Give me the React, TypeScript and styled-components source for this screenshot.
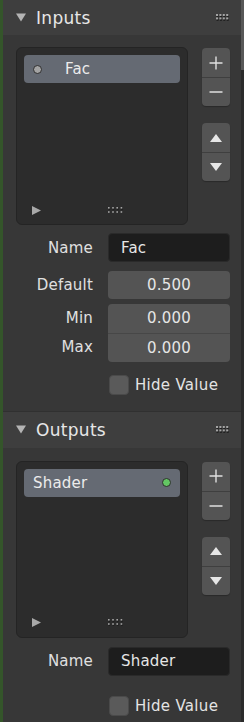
import * as React from 'react';
import styled, { createGlobalStyle } from "styled-components";

const GlobalStyle = createGlobalStyle`
    html, body {
        margin: 0;
        padding: 0;
        background: #373737;
    }
    body {
        font-family: "DejaVu Sans", "Noto Sans", sans-serif;
        color: #e4e4e4;
    }
`

const Frame = styled.div`
    display: flex;
    width: 244px;
    height: 722px;
    overflow: hidden;
    background: #373737;
`

const GreenStrip = styled.div`
    width: 3px;
    flex: none;
    background: #34552a;
`

const Column = styled.div`
    flex: 1;
    display: flex;
    flex-direction: column;
    min-width: 0;
`

const ScrollTrack = styled.div`
    width: 3px;
    flex: none;
    display: flex;
    flex-direction: column;
    background: #2b2b2b;
`

const ScrollThumb = styled.div`
    height: 70px;
    background: #585858;
`

const Header = styled.div<{ $h: number }>`
    height: ${p => p.$h}px;
    flex: none;
    display: flex;
    align-items: center;
    padding: 0 12px 0 13px;
    background: #3e3e3e;
    font-size: 17px;
    letter-spacing: 0.3px;
    color: #e6e6e6;

    .title {
        flex: 1;
        margin-left: 10px;
    }
`

const Body = styled.div<{ $top: number; $bottom: number }>`
    flex: none;
    display: flex;
    flex-direction: column;
    padding: ${p => p.$top}px 11px ${p => p.$bottom}px 13px;
    background: #373737;
`

const ListRow = styled.div`
    display: flex;
    gap: 14px;
    align-items: flex-start;
`

const ListBox = styled.div<{ $h: number }>`
    width: 172px;
    height: ${p => p.$h}px;
    box-sizing: border-box;
    flex: none;
    display: flex;
    flex-direction: column;
    padding: 7px 7px 0 7px;
    background: #2c2c2c;
    border: 1px solid #242424;
    border-radius: 6px;
`

const ListItem = styled.div`
    height: 28px;
    display: flex;
    align-items: center;
    padding: 0 9px 0 9px;
    background: #656a73;
    border-radius: 4px;
    font-size: 15px;
    letter-spacing: 0.2px;
    color: #ececec;

    .label {
        flex: 1;
    }
`

const Socket = styled.span<{ $color: string; $gap: number }>`
    width: 9px;
    height: 9px;
    box-sizing: border-box;
    border-radius: 50%;
    background: ${p => p.$color};
    border: 1px solid #2e2e2e;
    margin-right: ${p => p.$gap}px;
    flex: none;
`

const ListFooter = styled.div`
    margin-top: auto;
    height: 28px;
    display: flex;
    align-items: center;
    padding-left: 8px;

    .grip {
        margin-left: 67px;
    }
`

const SideButtons = styled.div`
    display: flex;
    flex-direction: column;
    gap: 17px;
    padding-top: 1px;
`

const ButtonPair = styled.div`
    width: 28px;
    display: flex;
    flex-direction: column;
    border-radius: 4px;
    overflow: hidden;
    background: #545454;
    box-shadow: 0 1px 1px rgba(0, 0, 0, 0.25);
`

const SideButton = styled.div`
    height: 29px;
    display: flex;
    align-items: center;
    justify-content: center;

    & + & {
        border-top: 1px solid #3f3f3f;
        height: 28px;
    }
`

const PropGrid = styled.div<{ $top: number }>`
    display: grid;
    grid-template-columns: 77px 122px;
    column-gap: 15px;
    margin-top: ${p => p.$top}px;
    font-size: 15px;
    letter-spacing: 0.2px;
`

const Label = styled.div`
    display: flex;
    align-items: center;
    justify-content: flex-end;
    color: #e0e0e0;
`

const TextField = styled.div`
    height: 29px;
    box-sizing: border-box;
    display: flex;
    align-items: center;
    padding-left: 12px;
    background: #1d1d1d;
    border: 1px solid #2a2a2a;
    border-radius: 4px;
    color: #e6e6e6;
`

const NumberField = styled.div<{ $pos: "single" | "top" | "bottom" }>`
    height: ${p => (p.$pos === "single" ? 28.5 : 29)}px;
    box-sizing: border-box;
    display: flex;
    align-items: center;
    justify-content: center;
    background: #545454;
    color: #e6e6e6;
    border-radius: ${p =>
        p.$pos === "single" ? "4px" : p.$pos === "top" ? "4px 4px 0 0" : "0 0 4px 4px"};
    border-top: ${p => (p.$pos === "bottom" ? "1px solid #474747" : "none")};
`

const Spacer = styled.div<{ $h: number }>`
    height: ${p => p.$h}px;
    grid-column: 1 / span 2;
`

const CheckRow = styled.div<{ $top: number }>`
    display: flex;
    align-items: center;
    margin-top: ${p => p.$top}px;
    margin-left: 93px;
    font-size: 15px;
    letter-spacing: 0.3px;
    color: #e4e4e4;
`

const CheckBox = styled.span`
    width: 20px;
    height: 20px;
    box-sizing: border-box;
    border-radius: 4px;
    background: #5a5a5a;
    border: 1px solid #4a4a4a;
    margin-right: 6px;
    flex: none;
`

const Gap = styled.div`
    height: 1px;
    flex: none;
    background: #303030;
`

function DownTriangle() {
    return (
        <svg width="10" height="9" viewBox="0 0 10 9">
            <polygon points="0,0.5 10,0.5 5,8.5" fill="#b4b4b4" />
        </svg>
    )
}

function RightTriangle() {
    return (
        <svg width="9" height="9" viewBox="0 0 9 9">
            <polygon points="0,0 9,4.5 0,9" fill="#a8a8a8" />
        </svg>
    )
}

function Grip({ dot, pitch }: { dot: number, pitch: number }) {
    const cols = [0, 1, 2, 3]
    const rows = [0, 1]
    return (
        <svg width={dot + pitch * 3 + 1} height={dot + pitch + 1} className="grip">
            {rows.map(r => cols.map(c => (
                <g key={`${r}-${c}`}>
                    <rect x={c * pitch + 0.5} y={r * pitch + 0.5 + 1} width={dot} height={dot} fill="#1e1e1e" />
                    <rect x={c * pitch} y={r * pitch} width={dot} height={dot} fill="#a4a4a4" />
                </g>
            )))}
        </svg>
    )
}

function Plus() {
    return (
        <svg width="14" height="14" viewBox="0 0 14 14">
            <path d="M7 0.5V13.5M0.5 7H13.5" stroke="#e0e0e0" strokeWidth="1.4" />
        </svg>
    )
}

function Minus() {
    return (
        <svg width="14" height="14" viewBox="0 0 14 14">
            <path d="M0.5 7H13.5" stroke="#e0e0e0" strokeWidth="1.4" />
        </svg>
    )
}

function Arrow({ up }: { up: boolean }) {
    return (
        <svg width="12" height="8" viewBox="0 0 12 8">
            <polygon points={up ? "6,0 12,8 0,8" : "0,0 12,0 6,8"} fill="#e6e6e6" />
        </svg>
    )
}

function SocketList({ name, socket, height }: { name: string, socket: "left" | "right", height: number }) {
    return (
        <ListRow>
            <ListBox $h={height}>
                <ListItem>
                    {socket === "left" && <Socket $color="#a3a3a3" $gap={23} />}
                    <span className="label">{name}</span>
                    {socket === "right" && <Socket $color="#63c763" $gap={0} />}
                </ListItem>
                <ListFooter>
                    <RightTriangle />
                    <Grip dot={1.6} pitch={4.2} />
                </ListFooter>
            </ListBox>
            <SideButtons>
                <ButtonPair>
                    <SideButton><Plus /></SideButton>
                    <SideButton><Minus /></SideButton>
                </ButtonPair>
                <ButtonPair>
                    <SideButton><Arrow up /></SideButton>
                    <SideButton><Arrow up={false} /></SideButton>
                </ButtonPair>
            </SideButtons>
        </ListRow>
    )
}

function PanelHeader({ title, height }: { title: string, height: number }) {
    return (
        <Header $h={height}>
            <DownTriangle />
            <span className="title">{title}</span>
            <Grip dot={2} pitch={3.4} />
        </Header>
    )
}

export default function App() {
    return (
        <Frame>
            <GlobalStyle />
            <GreenStrip />
            <Column>
                <PanelHeader title="Inputs" height={35} />
                <Body $top={12} $bottom={16}>
                    <SocketList name="Fac" socket="left" height={178} />
                    <PropGrid $top={8}>
                        <Label>Name</Label>
                        <TextField>Fac</TextField>
                        <Spacer $h={8.5} />
                        <Label>Default</Label>
                        <NumberField $pos="single">0.500</NumberField>
                        <Spacer $h={4.5} />
                        <Label>Min</Label>
                        <NumberField $pos="top">0.000</NumberField>
                        <Label>Max</Label>
                        <NumberField $pos="bottom">0.000</NumberField>
                    </PropGrid>
                    <CheckRow $top={13}>
                        <CheckBox />
                        Hide Value
                    </CheckRow>
                </Body>
                <Gap />
                <PanelHeader title="Outputs" height={36} />
                <Body $top={13} $bottom={10}>
                    <SocketList name="Shader" socket="right" height={177} />
                    <PropGrid $top={9}>
                        <Label>Name</Label>
                        <TextField>Shader</TextField>
                    </PropGrid>
                    <CheckRow $top={20}>
                        <CheckBox />
                        Hide Value
                    </CheckRow>
                </Body>
            </Column>
            <ScrollTrack>
                <ScrollThumb />
            </ScrollTrack>
        </Frame>
    )
}
